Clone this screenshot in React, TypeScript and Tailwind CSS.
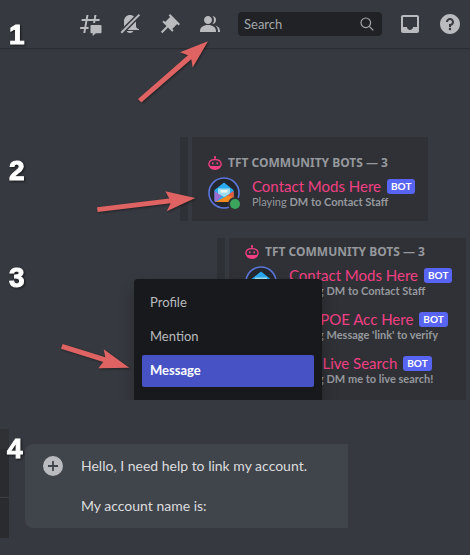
import type { ReactNode } from "react";

type Bot = { name: string; activity: string };

const bots: Bot[] = [
  { name: "Contact Mods Here", activity: "DM to Contact Staff" },
  { name: "Link POE Acc Here", activity: "Message 'link' to verify" },
  { name: "POE Live Search", activity: "DM me to live search!" },
];

const menuItems = ["Profile", "Mention", "Message"];

function IconButton({ label, children }: { label: string; children: ReactNode }) {
  return (
    <button type="button" aria-label={label} className="size-6 shrink-0 text-[#b9bbbe]">
      <svg viewBox="0 0 24 24" fill="currentColor" className="size-6">
        {children}
      </svg>
    </button>
  );
}

function Toolbar() {
  return (
    <header className="flex h-[49px] items-center justify-end gap-4 border-b border-[#2b2d32] pr-2 shadow-[0_1px_0_#32353b]">
      <IconButton label="Threads">
        <path d="M5.433 21c-.075 0-.131-.068-.118-.141L6 17H2.143c-.075 0-.131-.067-.118-.141l.308-1.76A.12.12 0 0 1 2.45 15h3.9l1.06-6H3.553c-.075 0-.131-.067-.118-.141l.308-1.76A.12.12 0 0 1 3.86 7h3.9l.692-3.901A.12.12 0 0 1 8.57 3h1.757c.075 0 .131.067.118.141L9.76 7h6l.692-3.901A.12.12 0 0 1 16.57 3h1.757c.075 0 .131.067.118.141L17.76 7h3.857c.075 0 .131.067.118.141l-.308 1.76a.12.12 0 0 1-.118.099h-3.9l-.36 2.04h-2l.361-2.04h-6l-1.06 6h2.21v2H8l-.693 3.901a.12.12 0 0 1-.118.099H5.433Z" />
        <path d="M13.44 12.96a.96.96 0 0 0-.96.96v6.301c0 .53.43.96.96.96h.96c.133 0 .24.108.24.24v2.039c0 .208.247.317.4.178l2.446-2.21a.96.96 0 0 1 .643-.247h4.431c.53 0 .96-.43.96-.96V13.92a.96.96 0 0 0-.96-.96h-9.12Z" />
      </IconButton>
      <IconButton label="Muted notifications">
        <mask id="bell-slash">
          <path fill="white" d="M0 0h24v24H0z" />
          <path d="M22 2 2 22" stroke="black" strokeWidth="5" />
        </mask>
        <path
          mask="url(#bell-slash)"
          d="M18 9v5c0 1.657 1.344 3 3 3v1H3v-1c1.656 0 3-1.343 3-3V9c0-3.314 2.686-6 6-6s6 2.686 6 6Zm-6 12c-1.476 0-2.752-.81-3.445-2h6.89c-.693 1.190-1.969 2-3.445 2Z"
        />
        <path d="m20.700 1.900 1.400 1.400L4 21.400 2.600 20z" />
      </IconButton>
      <IconButton label="Pinned messages">
        <path d="m22 12-9.899-9.899-1.415 1.413 1.415 1.415-4.95 4.949v.002L5.736 8.465 4.322 9.88l4.243 4.242-5.657 5.656 1.414 1.414 5.657-5.656 4.243 4.242 1.414-1.414-1.414-1.414L19.171 12h.001l1.414 1.414L22 12Z" />
      </IconButton>
      <IconButton label="Member list">
        <path d="M14 8.006c0 2.205-1.794 4-4 4-2.205 0-4-1.795-4-4s1.794-4 4-4 4 1.795 4 4Zm-12 11c0-3.533 3.29-6 8-6 4.711 0 8 2.467 8 6v1H2v-1Z" />
        <path d="M20 20.006h2v-1c0-2.563-1.73-4.565-4.479-5.471C19.062 14.913 20 16.806 20 19.006v1Zm-5.117-8.098A4 4 0 0 0 18 8.006a4 4 0 0 0-3.503-3.97A5.98 5.98 0 0 1 16 8.007a5.98 5.98 0 0 1-1.362 3.804l.245.098Z" />
      </IconButton>
      <label className="flex h-6 w-36 items-center rounded bg-[#202225] pr-2 pl-1.5">
        <input
          type="search"
          aria-label="Search"
          placeholder="Search"
          className="min-w-0 flex-1 bg-transparent text-[13px] leading-5 text-[#dcddde] outline-none placeholder:text-[#a3a6aa]"
        />
        <svg viewBox="0 0 14 14" fill="none" stroke="#a3a6aa" strokeWidth="1.2" className="size-3.5 shrink-0">
          <circle cx="5.8" cy="5.8" r="4.8" />
          <path d="m9.3 9.3 4 4" />
        </svg>
      </label>
      <IconButton label="Inbox">
        <path d="M19 3H4.99C3.88 3 3.01 3.89 3.01 5L3 19c0 1.1.88 2 1.99 2H19c1.1 0 2-.9 2-2V5c0-1.11-.9-2-2-2Zm0 12h-4c0 1.66-1.35 3-3 3s-3-1.34-3-3H4.99V5H19v10Z" />
      </IconButton>
      <IconButton label="Help">
        <path d="M12 2C6.486 2 2 6.487 2 12c0 5.515 4.486 10 10 10s10-4.485 10-10c0-5.513-4.486-10-10-10Zm0 16.25c-.69 0-1.25-.559-1.25-1.25 0-.69.56-1.25 1.25-1.25s1.25.56 1.25 1.25c0 .691-.56 1.25-1.25 1.25Zm1-4.375V15h-2v-3h1c1.104 0 2-.897 2-2 0-1.104-.896-2-2-2s-2 .896-2 2H8c0-2.205 1.795-4 4-4s4 1.795 4 4c0 1.861-1.277 3.429-3 3.875Z" />
      </IconButton>
    </header>
  );
}

function StepNumber({ value }: { value: number }) {
  return (
    <span className="block font-['Liberation_Sans',Arial,sans-serif] text-[28px] leading-7 font-bold text-white drop-shadow-[1px_1px_1px_#00000099] [-webkit-text-stroke:1px_white]">
      {value}
    </span>
  );
}

function RobotIcon() {
  return (
    <svg viewBox="0 0 14 14" fill="none" className="size-3.5 shrink-0 text-[#f23f84]">
      <g stroke="currentColor" strokeWidth="1.300">
        <path d="M7 3.5V1" />
        <path d="M7 3.700C3.300 3.700.9 5.400.9 8.200c0 1.600 1.100 2.500 2.700 2.500h6.800c1.600 0 2.700-.9 2.700-2.500 0-2.800-2.400-4.500-6.100-4.500Z" />
      </g>
      <g fill="currentColor">
        <path d="M.9 9.500c.9 1.100 2 1.400 3.100 1.400h6c1.100 0 2.200-.3 3.100-1.400-.3 2.700-2.500 4.400-6.100 4.400S1.200 12.200.9 9.500Z" />
        <circle cx="7" cy="1.100" r="1.100" />
        <ellipse cx="4.800" cy="7.300" rx=".9" ry="1.100" />
        <ellipse cx="9.200" cy="7.300" rx=".9" ry="1.100" />
      </g>
    </svg>
  );
}

function Avatar() {
  return (
    <svg viewBox="0 0 32 32" className="size-8 shrink-0">
      <circle cx="16" cy="16" r="15" fill="#24272d" stroke="#5b76d8" strokeWidth="1.6" />
      <path d="M16 5.500 25.500 13v10.500a1.500 1.500 0 0 1-1.500 1.500H8a1.500 1.500 0 0 1-1.500-1.500V13z" fill="#29a9f0" />
      <path d="M6.500 14 14 19l-6.500 6a1.500 1.500 0 0 1-1-1.500z" fill="#9a6bd0" />
      <path d="M25.500 15.500 7.500 25H24a1.500 1.500 0 0 0 1.500-1.500z" fill="#f58a1f" />
      <path d="m19 18.500 6.500-4.500v6z" fill="#e9573f" />
      <path d="M10 11.500h12v5L16 20l-6-3.500z" fill="#9fdcec" />
      <path d="M12.500 13h7v2.500h-7z" fill="#e8f6f8" />
      <circle cx="27" cy="27" r="7" fill="#2f3136" />
      <circle cx="27" cy="27" r="5" fill="#3ba55d" />
    </svg>
  );
}

function BotRow({ bot }: { bot: Bot }) {
  return (
    <li className="flex h-8 items-center gap-3">
      <Avatar />
      <div className="whitespace-nowrap">
        <div className="flex items-center gap-1.5">
          <span className="text-[15px] leading-[18px] text-[#f23f84]">{bot.name}</span>
          <span className="rounded-[3px] bg-[#5865f2] px-1 text-[10px] leading-[15px] font-bold text-white">BOT</span>
        </div>
        <div className="text-[11px] leading-[14px] text-[#96989d]">
          Playing <strong className="font-bold">{bot.activity}</strong>
        </div>
      </div>
    </li>
  );
}

function MemberPanel({ members, className }: { members: Bot[]; className: string }) {
  return (
    <div className="flex shrink-0 gap-1">
      <div className="w-2 bg-[#2e3136]" />
      <div className={`bg-[#2f3136] pl-4 ${className}`}>
        <h2 className="flex h-4 items-center gap-1.5 font-['Noto_Sans',sans-serif] text-[12px] leading-4 font-bold whitespace-nowrap text-[#96989d]">
          <RobotIcon />
          TFT COMMUNITY BOTS — 3
        </h2>
        <ul className="mt-1.5 flex flex-col gap-3">
          {members.map((bot) => (
            <BotRow key={bot.name} bot={bot} />
          ))}
        </ul>
      </div>
    </div>
  );
}

function ContextMenu() {
  return (
    <div
      role="menu"
      className="absolute top-[41px] left-[134px] flex w-[188px] flex-col gap-0.5 rounded bg-[#18191c] px-2 pt-2 pb-6 shadow-[0_8px_16px_#0000003d]"
    >
      {menuItems.map((item) => (
        <button
          key={item}
          type="button"
          role="menuitem"
          className={`h-8 rounded-[2px] px-2 text-left text-[13px] ${
            item === "Message" ? "bg-[#4752c4] font-bold text-white" : "text-[#b9bbbe]"
          }`}
        >
          {item}
        </button>
      ))}
    </div>
  );
}

function Composer() {
  return (
    <div className="mt-[15px] ml-4 flex w-[323px] gap-[18px] self-start rounded-l-lg bg-[#40444b] py-3 pl-[18px]">
      <button type="button" aria-label="Attach" className="size-5 shrink-0">
        <svg viewBox="0 0 20 20" className="size-5">
          <circle cx="10" cy="10" r="10" fill="#b9bbbe" />
          <path d="M10 5v10M5 10h10" stroke="#40444b" strokeWidth="1.8" />
        </svg>
      </button>
      <textarea
        aria-label="Message"
        rows={3}
        className="min-w-0 flex-1 resize-none overflow-hidden bg-transparent text-[14px] leading-5 text-[#dcddde] outline-none"
        defaultValue={"Hello, I need help to link my account.\n\nMy account name is:"}
      />
    </div>
  );
}

function Arrows() {
  return (
    <svg
      viewBox="0 0 470 400"
      fill="#df6363"
      className="pointer-events-none absolute top-0 left-0 h-[400px] w-[470px] drop-shadow-[1px_1px_1px_#00000066]"
    >
      <path d="M208 41.300 180 52.300 188 55.200 138 99 141.300 102.500 191.300 59.300 192.700 67.500z" />
      <path d="M195.300 198 165.300 191.300 169.300 198.500 97 207.300 97.700 212 170.700 203.300 166.700 211.300z" />
      <path d="M129.300 367.700 103.700 349.300 105.300 357.300 62.700 344 61 348.700 103.300 362 98.300 368.300z" />
    </svg>
  );
}

export default function App() {
  return (
    <main className="relative min-h-screen overflow-hidden bg-[#36393f] font-['Lato','Noto_Sans',sans-serif]">
      <Toolbar />
      <div className="absolute top-[21px] left-[9px]">
        <StepNumber value={1} />
      </div>

      <section className="mt-[88px] flex justify-between pr-[42px] pl-[9px]">
        <div className="pt-5">
          <StepNumber value={2} />
        </div>
        <MemberPanel members={bots.slice(0, 1)} className="w-[236px] pt-[18px] pb-3" />
      </section>

      <section className="relative mt-[17px] flex h-[162px] justify-between overflow-hidden pr-1 pl-[9px]">
        <div className="pt-[26px]">
          <StepNumber value={3} />
        </div>
        <MemberPanel members={bots} className="w-[237px] pt-1.5" />
        <ContextMenu />
      </section>

      <section className="relative mt-[29px] flex h-[109px]">
        <div className="flex w-[9px] shrink-0 flex-col bg-[#2a2b2f]">
          <div className="h-5 bg-[#303135]" />
          <div className="h-[49px] border-b border-[#3c3e43]" />
        </div>
        <Composer />
        <div className="absolute top-[6px] left-[7px]">
          <StepNumber value={4} />
        </div>
      </section>

      <Arrows />
    </main>
  );
}
